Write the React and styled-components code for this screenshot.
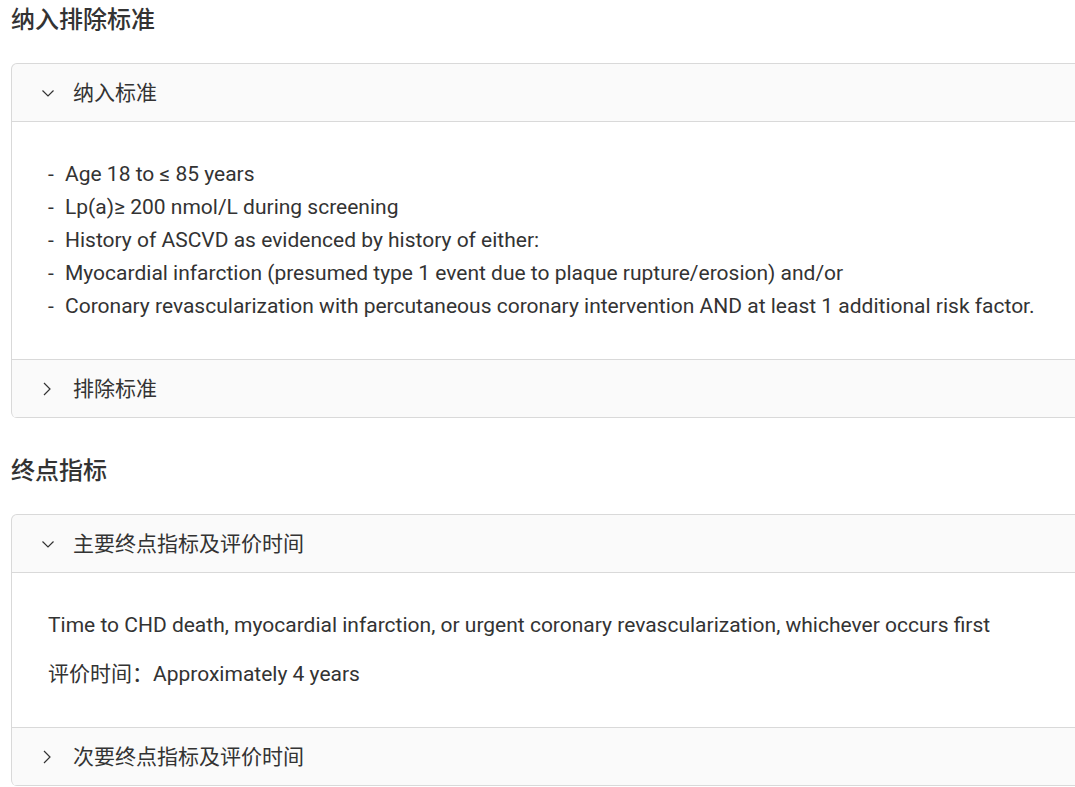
import React, { useState } from "react";
import styled, { createGlobalStyle } from "styled-components";

const GlobalStyle = createGlobalStyle`
  html, body {
    margin: 0;
    padding: 0;
    background: #ffffff;
    overflow: hidden;
  }
  body {
    font-family: Roboto, "Noto Sans CJK SC", sans-serif;
    color: #333333;
  }
`;

const sections = [
  {
    title: "纳入排除标准",
    panels: [
      {
        key: "in",
        label: "纳入标准",
        list: [
          "Age 18 to ≤ 85 years",
          "Lp(a)≥ 200 nmol/L during screening",
          "History of ASCVD as evidenced by history of either:",
          "Myocardial infarction (presumed type 1 event due to plaque rupture/erosion) and/or",
          "Coronary revascularization with percutaneous coronary intervention AND at least 1 additional risk factor.",
        ],
      },
      { key: "ex", label: "排除标准", list: [] },
    ],
    open: ["in"],
  },
  {
    title: "终点指标",
    panels: [
      {
        key: "primary",
        label: "主要终点指标及评价时间",
        paras: [
          "Time to CHD death, myocardial infarction, or urgent coronary revascularization, whichever occurs first",
          "评价时间：Approximately 4 years",
        ],
      },
      { key: "secondary", label: "次要终点指标及评价时间", paras: [] },
    ],
    open: ["primary"],
  },
];

function Chevron({ open }) {
  return (
    <Arrow viewBox="0 0 18 18">
      {open ? (
        <polyline points="3.5,6.5 9,12 14.5,6.5" fill="none" stroke="#333" strokeWidth="1.2" />
      ) : (
        <polyline points="5,3 11,9 5,15" fill="none" stroke="#333" strokeWidth="1.2" />
      )}
    </Arrow>
  );
}

function Section({ data }) {
  const [open, setOpen] = useState(data.open);
  const toggle = (key) =>
    setOpen(open.includes(key) ? open.filter((k) => k !== key) : [...open, key]);

  return (
    <Block>
      <Title>{data.title}</Title>
      <Collapse>
        {data.panels.map((p) => {
          const isOpen = open.includes(p.key);
          return (
            <Panel key={p.key}>
              <Header onClick={() => toggle(p.key)}>
                <Chevron open={isOpen} />
                <Label>{p.label}</Label>
              </Header>
              {isOpen && (
                <Content>
                  {p.list && (
                    <List>
                      {p.list.map((item, i) => (
                        <Item key={i}>{item}</Item>
                      ))}
                    </List>
                  )}
                  {p.paras &&
                    p.paras.map((t, i) => <Para key={i}>{t}</Para>)}
                </Content>
              )}
            </Panel>
          );
        })}
      </Collapse>
    </Block>
  );
}

export default function App() {
  return (
    <Page>
      <GlobalStyle />
      {sections.map((s) => (
        <Section key={s.title} data={s} />
      ))}
    </Page>
  );
}

const Page = styled.div`
  padding: 2px 0 0 11px;
  display: flex;
  flex-direction: column;
  gap: 35px;
`;

const Block = styled.section`
  display: flex;
  flex-direction: column;
`;

const Title = styled.h2`
  margin: 0 0 25px 0;
  font-size: 24px;
  line-height: 36px;
  font-weight: 500;
  color: #333;
`;

const Collapse = styled.div`
  width: 1100px;
  border: 1px solid #d9d9d9;
  border-bottom: 0;
  border-radius: 6px;
  background: #fafafa;
  overflow: hidden;
`;

const Panel = styled.div`
  border-bottom: 1px solid #d9d9d9;
`;

const Header = styled.div`
  display: flex;
  align-items: center;
  height: 57px;
  padding: 0 24px 0 27px;
  font-size: 21px;
  color: #333;
  cursor: pointer;
  user-select: none;
`;

const Label = styled.span`
  margin-left: 16px;
  padding-bottom: 3px;
`;

const Arrow = styled.svg`
  width: 18px;
  height: 18px;
  flex: none;
`;

const Content = styled.div`
  background: #ffffff;
  border-top: 1px solid #d9d9d9;
  padding: 36px 36px 36px 36px;
`;

const List = styled.ul`
  list-style: none;
  margin: 0;
  padding: 0;
`;

const Item = styled.li`
  font-size: 21px;
  line-height: 33px;
  padding-left: 17px;
  position: relative;

  &::before {
    content: "-";
    position: absolute;
    left: 0;
  }
`;

const Para = styled.p`
  margin: 0;
  font-size: 21px;
  line-height: 33px;

  & + & {
    margin-top: 16px;
  }
`;
